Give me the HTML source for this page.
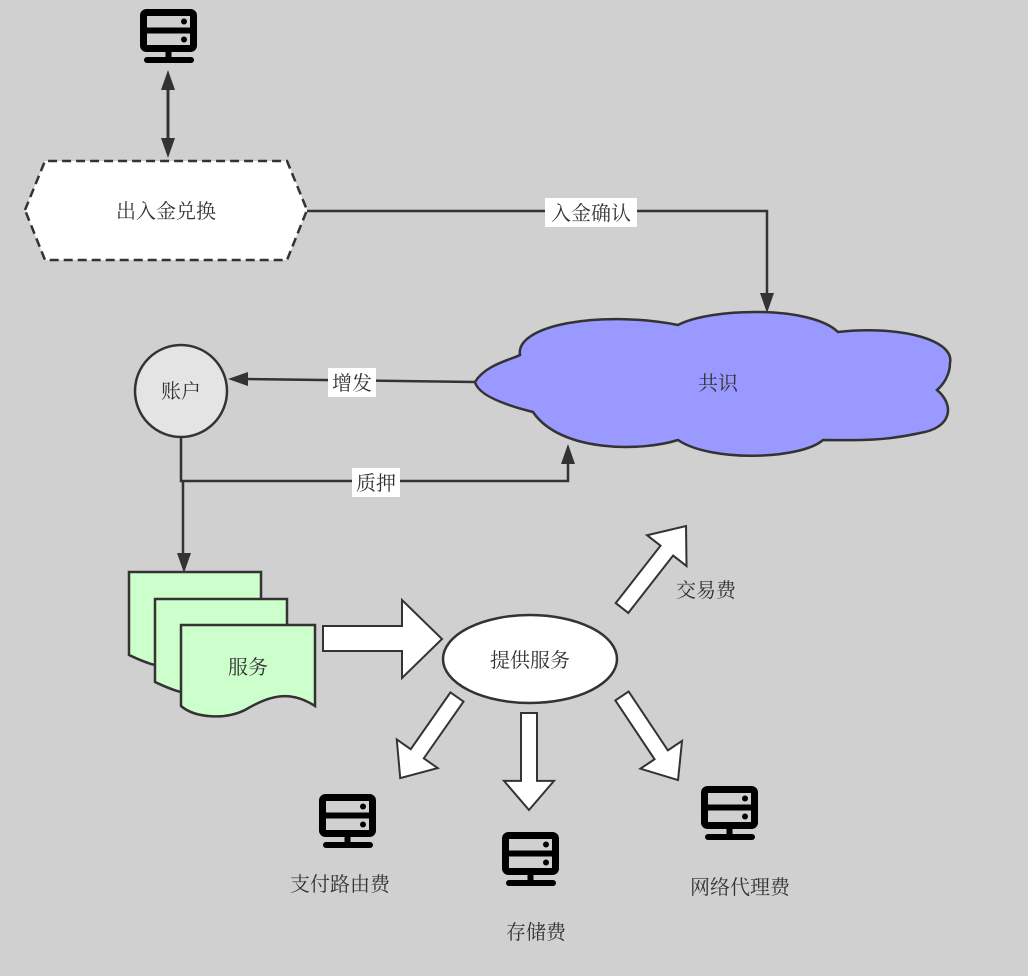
<!DOCTYPE html>
<html><head><meta charset="utf-8"><style>
html,body{margin:0;padding:0;background:#d0d0d0;}
svg{display:block}
text{font-family:"Noto Serif CJK SC","Noto Serif CJK JP","Liberation Serif",serif;font-size:20px;fill:#333;}
</style></head><body>
<svg width="1028" height="976" viewBox="0 0 1028 976" xmlns="http://www.w3.org/2000/svg">
<defs>
<g id="srv">
<rect x="3.5" y="3.5" width="50" height="36" rx="3" fill="none" stroke="#000" stroke-width="7"/>
<line x1="3" y1="21.5" x2="54" y2="21.5" stroke="#000" stroke-width="6"/>
<circle cx="44" cy="12.5" r="3" fill="#000"/>
<circle cx="44" cy="30.5" r="3" fill="#000"/>
<line x1="28.5" y1="42" x2="28.5" y2="52" stroke="#000" stroke-width="6"/>
<line x1="7" y1="51" x2="51" y2="51" stroke="#000" stroke-width="6" stroke-linecap="round"/>
</g>
<path id="barrow" d="M0,-8 L70,-8 L70,-25 L100,0 L70,25 L70,8 L0,8 Z"/>
</defs>

<use href="#srv" x="140" y="9"/>
<line x1="168" y1="88" x2="168" y2="140" stroke="#333" stroke-width="3"/>
<polygon points="168,70 161,90 175,90" fill="#333"/>
<polygon points="168,158 161,138 175,138" fill="#333"/>

<polygon points="25,210 45,161 287,161 307,210 287,260 45,260" fill="#fff" stroke="#333" stroke-width="2.5" stroke-dasharray="9,5"/>
<text x="166" y="218" text-anchor="middle">出入金兑换</text>

<polyline points="307,211 767,211 767,295" fill="none" stroke="#333" stroke-width="2.5"/>
<polygon points="767,313 760,293 774,293" fill="#333"/>
<rect x="545" y="198" width="92" height="29" fill="#fff"/>
<text x="591" y="220" text-anchor="middle">入金确认</text>

<path d="M475,382 C485,365 510,360 520,355 C515,325 600,310 678,325 C710,308 810,305 838,332 C900,325 955,340 950,363 C950,375 943,385 937,390 C955,405 952,428 920,433 C880,442 850,440 823,440 C800,460 710,462 678,440 C640,452 560,452 533,412 C505,405 478,395 475,382 Z" fill="#9999ff" stroke="#333" stroke-width="2.5"/>
<text x="718" y="390" text-anchor="middle">共识</text>

<circle cx="181" cy="391" r="46" fill="#e4e4e4" stroke="#333" stroke-width="2.5"/>
<text x="181" y="398" text-anchor="middle">账户</text>

<line x1="475" y1="382" x2="245" y2="379" stroke="#333" stroke-width="2.5"/>
<polygon points="228,379 248,372 248,386" fill="#333"/>
<rect x="328" y="368" width="48" height="29" fill="#fff"/>
<text x="352" y="390" text-anchor="middle">增发</text>

<polyline points="181,438 181,481 568,481 568,462" fill="none" stroke="#333" stroke-width="2.5"/>
<polygon points="568,444 561,464 575,464" fill="#333"/>
<rect x="352" y="468" width="48" height="29" fill="#fff"/>
<text x="376" y="490" text-anchor="middle">质押</text>
<line x1="183" y1="481" x2="183" y2="555" stroke="#333" stroke-width="2.5"/>
<polygon points="184,573 177,553 191,553" fill="#333"/>

<path d="M129,572 L261,572 L261,660 C240,650 220,665 180,668 C155,668 140,660 129,655 Z" fill="#ccffcc" stroke="#333" stroke-width="2.5"/>
<path d="M155,599 L287,599 L287,687 C266,677 246,692 206,695 C181,695 166,687 155,682 Z" fill="#ccffcc" stroke="#333" stroke-width="2.5"/>
<path d="M181,625 L315,625 L315,706 C290,690 270,695 245,710 C225,720 195,718 181,706 Z" fill="#ccffcc" stroke="#333" stroke-width="2.5"/>
<text x="248" y="674" text-anchor="middle">服务</text>

<polygon points="323,626 402,626 402,600 442,639 402,678 402,651 323,651" fill="#fff" stroke="#333" stroke-width="2"/>

<ellipse cx="530" cy="659" rx="87" ry="44" fill="#fff" stroke="#333" stroke-width="2.5"/>
<text x="530" y="667" text-anchor="middle">提供服务</text>

<g fill="#fff" stroke="#333" stroke-width="2">
<use href="#barrow" transform="translate(457,697) rotate(125) scale(0.99,1)"/>
<use href="#barrow" transform="translate(529,713) rotate(90) scale(0.97,1)"/>
<use href="#barrow" transform="translate(622,696) rotate(56.3) scale(1.01,1)"/>
<use href="#barrow" transform="translate(622,608) rotate(-52) scale(1.04,1)"/>
</g>

<text x="706" y="597" text-anchor="middle">交易费</text>

<use href="#srv" x="319" y="794"/>
<use href="#srv" x="502" y="832"/>
<use href="#srv" x="701" y="786"/>

<text x="340" y="891" text-anchor="middle">支付路由费</text>
<text x="536" y="939" text-anchor="middle">存储费</text>
<text x="740" y="894" text-anchor="middle">网络代理费</text>
</svg>
</body></html>
